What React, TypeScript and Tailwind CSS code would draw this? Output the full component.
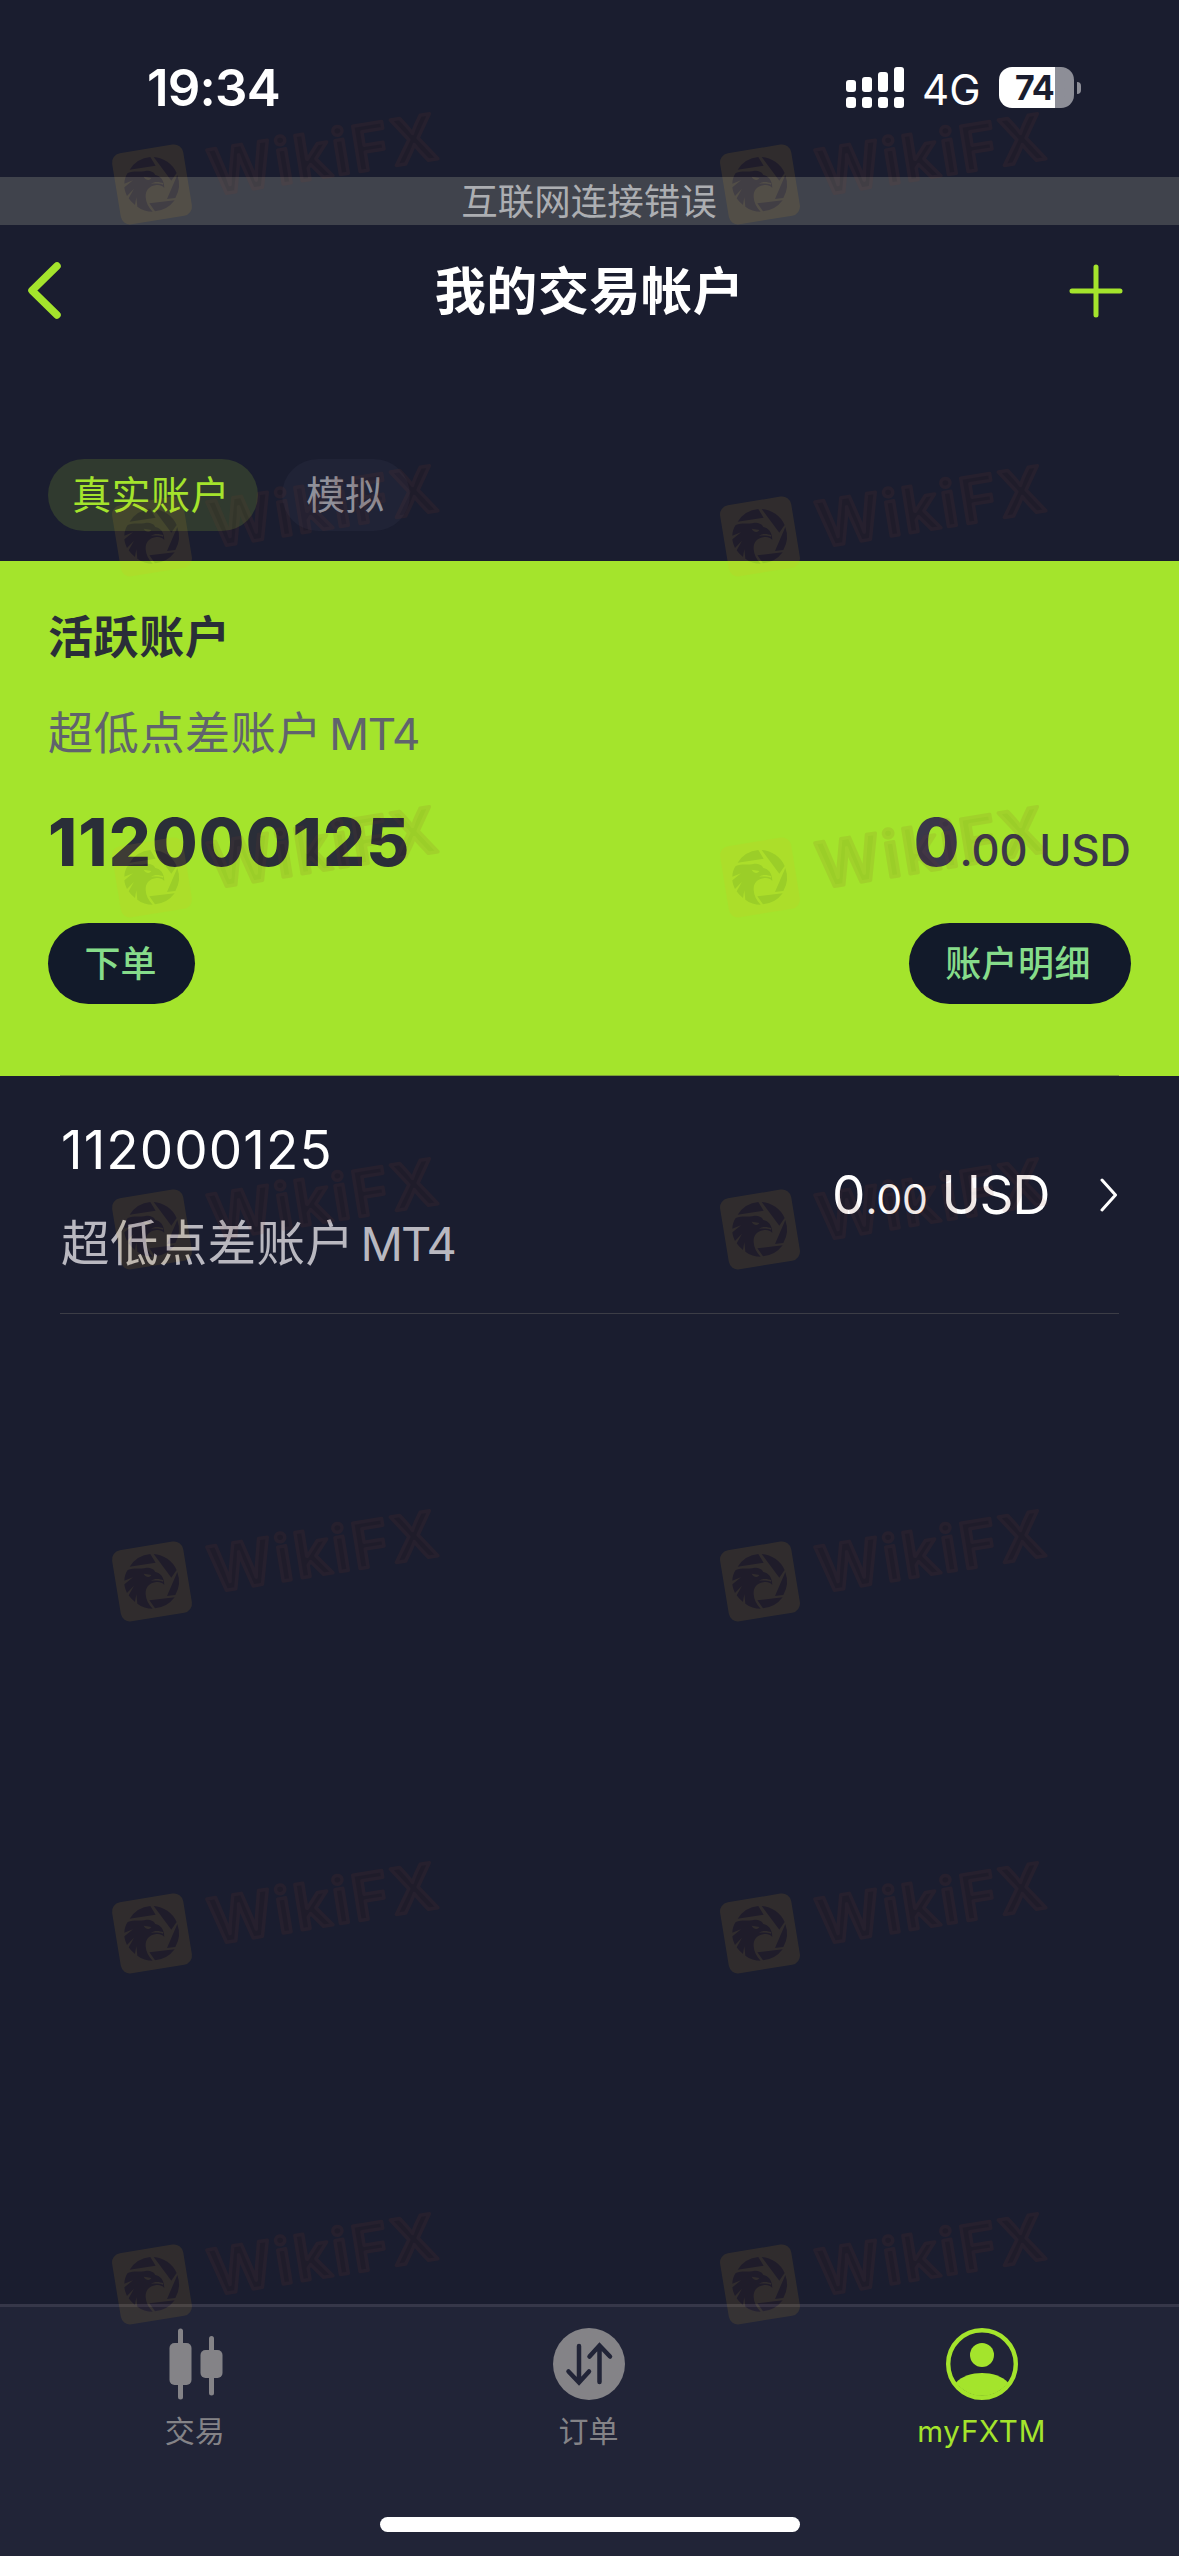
import type { ReactNode } from 'react'

const WATERMARK_ROWS = [
  'top-[140px]',
  'top-[492px]',
  'top-[833px]',
  'top-[1185px]',
  'top-[1537px]',
  'top-[1889px]',
  'top-[2240px]',
]

function Watermark() {
  return (
    <svg width="360" height="140" viewBox="0 -50 360 140" className="-mt-[50px] opacity-10">
      <g transform="scale(0.3333)">
        <rect x="27" y="25" width="216" height="216" rx="28" fill="#f0b41e" transform="rotate(-9.3 137 133)" />
        <g fill="#501408">
          <path d="M68 89A82 82 0 0 1 130 51L146 77Z" />
          <path d="M140 51A82 82 0 0 1 209 99L193 122Z" />
          <path d="M211 105A82 82 0 0 1 205 174L180 177Z" />
          <path d="M203 181A82 82 0 0 1 144 214L127 190Z" />
          <path d="M62 99C80 91 100 97 118 92C134 92 142 97 145 105C160 108 172 120 172 144C164 136 156 134 145 136C126 139 115 152 116 171C117 188 124 202 137 215C120 215 104 210 91 200L88 172L84 195C76 189 70 182 65 175L81 146L60 168C56 160 53 151 52 142L78 121L52 131C52 119 56 108 62 99Z" />
        </g>
        <path d="M110 110L133 114C128 123 117 122 110 110ZM132 131C145 123 158 126 169 130L168 134C156 130 146 130 132 131Z" fill="#f0b41e" />
      </g>
      <text
        x="103"
        y="65"
        textLength="230"
        lengthAdjust="spacing"
        transform="rotate(-9.3 46 44)"
        className="font-['Inter'] text-[63px] font-semibold"
        fill="#501408"
        stroke="#8c3c28"
        strokeWidth="3.5"
        strokeLinejoin="round"
      >
        WikiFX
      </text>
    </svg>
  )
}

function StatusBar() {
  return (
    <div className="flex h-[177px] items-start justify-between pl-[147px] pr-[98px] text-white">
      <span className="mt-[58px] text-[51px] font-semibold leading-[60px] tracking-[-0.8px]">19:34</span>
      <div className="mt-[67px] flex h-[41px] items-center">
        <svg width="58" height="41" viewBox="0 0 58 41" fill="#fff">
          <rect x="0" y="13" width="10" height="12" rx="3" />
          <rect x="16" y="10" width="10" height="15" rx="3" />
          <rect x="32" y="5" width="10" height="20" rx="3" />
          <rect x="48" y="0" width="10" height="25" rx="3" />
          <rect x="0" y="30" width="10" height="11" rx="3" />
          <rect x="16" y="30" width="10" height="11" rx="3" />
          <rect x="32" y="30" width="10" height="11" rx="3" />
          <rect x="48" y="30" width="10" height="11" rx="3" />
        </svg>
        <span className="ml-[18px] mt-[3px] w-[77px] text-[42px] leading-[41px]">4G</span>
        <div className="flex h-[41px] w-[75px] items-center overflow-hidden rounded-[13px] bg-linear-to-r from-white from-75% to-[#8d8e97] to-75%">
          <span className="pl-4 text-[34px] font-bold leading-[41px] tracking-[-1px] text-[#1a1d2f]">74</span>
        </div>
        <div className="ml-[3px] h-3 w-1 rounded-r-full bg-[#8d8e97]" />
      </div>
    </div>
  )
}

function Amount({ whole, cents, currency }: { whole: ReactNode; cents: ReactNode; currency: ReactNode }) {
  return (
    <div className="flex items-baseline whitespace-pre">
      {whole}
      {cents}
      {currency}
    </div>
  )
}

function AccountCard() {
  return (
    <section className="flex h-[515px] flex-col bg-[#a4e42c] px-12 pt-[47px] text-[#2a2e38]">
      <h2 className="h-[60px] text-[45px] font-semibold leading-[60px] tracking-[0.6px]">活跃账户</h2>
      <p className="mt-9 h-[60px] text-[45px] leading-[60px] tracking-[0.7px] text-[#60636d]">
        超低点差账户<span className="ml-[7px] text-[44px] tracking-[-1.2px]">MT4</span>
      </p>
      <div className="mt-[38px] flex h-[80px] items-baseline justify-between">
        <span className="text-[66px] font-extrabold leading-[80px] tracking-[1.2px]">112000125</span>
        <div className="text-[#3a3749]">
          <Amount
            whole={<span className="text-[66px] font-extrabold leading-[80px]">0</span>}
            cents={<span className="text-[43.5px] font-medium">.00 </span>}
            currency={<span className="text-[43.5px] font-medium">USD</span>}
          />
        </div>
      </div>
      <div className="mt-[41px] flex justify-between text-[36px] font-medium text-[#86dc8a]">
        <button className="h-[81px] w-[147px] rounded-full bg-[#121a2a] pr-[2px] leading-[83px]">下单</button>
        <button className="h-[81px] w-[222px] rounded-full bg-[#121a2a] pr-[4px] leading-[83px] tracking-[0.4px]">账户明细</button>
      </div>
      <div className="mx-3 mt-auto h-px bg-[#7c9e38]" />
    </section>
  )
}

function AccountRow() {
  return (
    <div className="mx-[60px] flex h-[238px] items-center justify-between border-b border-[#3c3d46] text-white">
      <div className="flex flex-col pt-1">
        <span className="ml-px text-[53px] leading-[64px] tracking-[1.1px]">112000125</span>
        <span className="ml-px mt-[30px] text-[48.5px] leading-[64px] tracking-[0.4px] text-[#b9b8c0]">
          超低点差账户<span className="ml-[6px] text-[47px] tracking-[-1.8px]">MT4</span>
        </span>
      </div>
      <div className="flex items-center">
        <div className="pt-[2px]">
          <Amount
            whole={<span className="text-[53px]">0</span>}
            cents={<span className="text-[41px]">.00</span>}
            currency={<span className="text-[53px] tracking-[-1.4px]"> USD</span>}
          />
        </div>
        <svg width="18" height="36" viewBox="0 0 18 36" fill="none" stroke="#fff" strokeWidth="3" strokeLinecap="round" strokeLinejoin="round" className="ml-[51px] mr-px">
          <path d="M2 3L15.5 18L2 33" />
        </svg>
      </div>
    </div>
  )
}

function TabBar() {
  return (
    <nav className="flex h-[252px] flex-col border-t-[3px] border-[#363749] bg-[#212437]">
      <div className="grid grid-cols-3 pr-px pt-[21px] text-[30px] leading-[40px] text-[#848387]">
        <div className="flex flex-col items-center pr-px">
          <svg width="72" height="72" viewBox="0 0 72 72" fill="#848387">
            <rect x="18" y="0.5" width="5" height="71" rx="2.5" />
            <rect x="9.5" y="15" width="22" height="42" rx="5" />
            <rect x="49" y="8" width="5" height="59.5" rx="2.5" />
            <rect x="40.5" y="22" width="22" height="28" rx="5" />
          </svg>
          <span className="mt-[11px] pr-[2px]">交易</span>
        </div>
        <div className="flex flex-col items-center">
          <svg width="72" height="72" viewBox="0 0 72 72" fill="none">
            <circle cx="36" cy="36" r="36" fill="#848387" />
            <g stroke="#212437" strokeWidth="4.5" strokeLinecap="round">
              <path d="M26 18V53M15.5 43.5L26 54.5L36 43.5" />
              <path d="M46.5 54V19M36.5 28.5L46.5 17.5L57 28.5" />
            </g>
          </svg>
          <span className="mt-[11px] pr-px">订单</span>
        </div>
        <div className="flex flex-col items-center text-[#a4e42c]">
          <svg width="72" height="72" viewBox="0 0 72 72" fill="#a4e42c">
            <circle cx="36" cy="36" r="33.8" fill="none" stroke="#a4e42c" strokeWidth="4.4" />
            <circle cx="36" cy="27" r="12" />
            <path d="M10 54.5C16 48 26 45 36 45S56 48 62 54.5A32 32 0 0 1 10 54.5Z" />
          </svg>
          <span className="mt-[11px] text-[29.5px] tracking-[0.8px]">myFXTM</span>
        </div>
      </div>
      <div className="mx-auto mb-6 mt-auto h-[15px] w-[420px] rounded-full bg-white" />
    </nav>
  )
}

export default function App() {
  return (
    <div className="relative flex h-[2556px] w-[1179px] flex-col overflow-hidden bg-[#1a1d2f] font-['Inter','Noto_Sans_CJK_SC',sans-serif]">
      <StatusBar />

      {/* Offline banner */}
      <div className="h-12 bg-[#40434c] pr-px text-center text-[36.5px] leading-[50px] text-[#acaeb2]">互联网连接错误</div>

      <header className="flex h-[132px] items-center justify-between pl-[26px] pr-[56px]">
        <svg width="38" height="68" viewBox="0 0 38 68" fill="none" stroke="#a4e42c" strokeWidth="7.5" strokeLinecap="round" strokeLinejoin="round">
          <path d="M31 9L6 33.5L31 58" />
        </svg>
        <h1 className="ml-[46px] pt-px text-[51px] font-semibold leading-[68px] tracking-[0.6px] text-white">我的交易帐户</h1>
        <svg width="54" height="54" viewBox="0 0 54 54" stroke="#a4e42c" strokeWidth="5" strokeLinecap="round">
          <path d="M27 3V51M3 27H51" />
        </svg>
      </header>

      {/* Account type */}
      <div className="mb-[30px] mt-[102px] flex gap-6 pl-12 text-[39px] leading-[72px]">
        <div className="h-[72px] w-[210px] rounded-full bg-[#303a2f] pr-[4px] text-center tracking-[0.4px] text-[#a4e42c]">真实账户</div>
        <div className="h-[72px] w-[128px] rounded-full bg-[#202336] pr-[2px] text-center text-[#8f909a]">模拟</div>
      </div>

      <AccountCard />
      <AccountRow />
      <div className="flex-1" />
      <TabBar />

      {WATERMARK_ROWS.map(top => (
        <div key={top} className={`pointer-events-none absolute left-[107px] flex gap-[248px] ${top}`}>
          <Watermark />
          <Watermark />
        </div>
      ))}
    </div>
  )
}
